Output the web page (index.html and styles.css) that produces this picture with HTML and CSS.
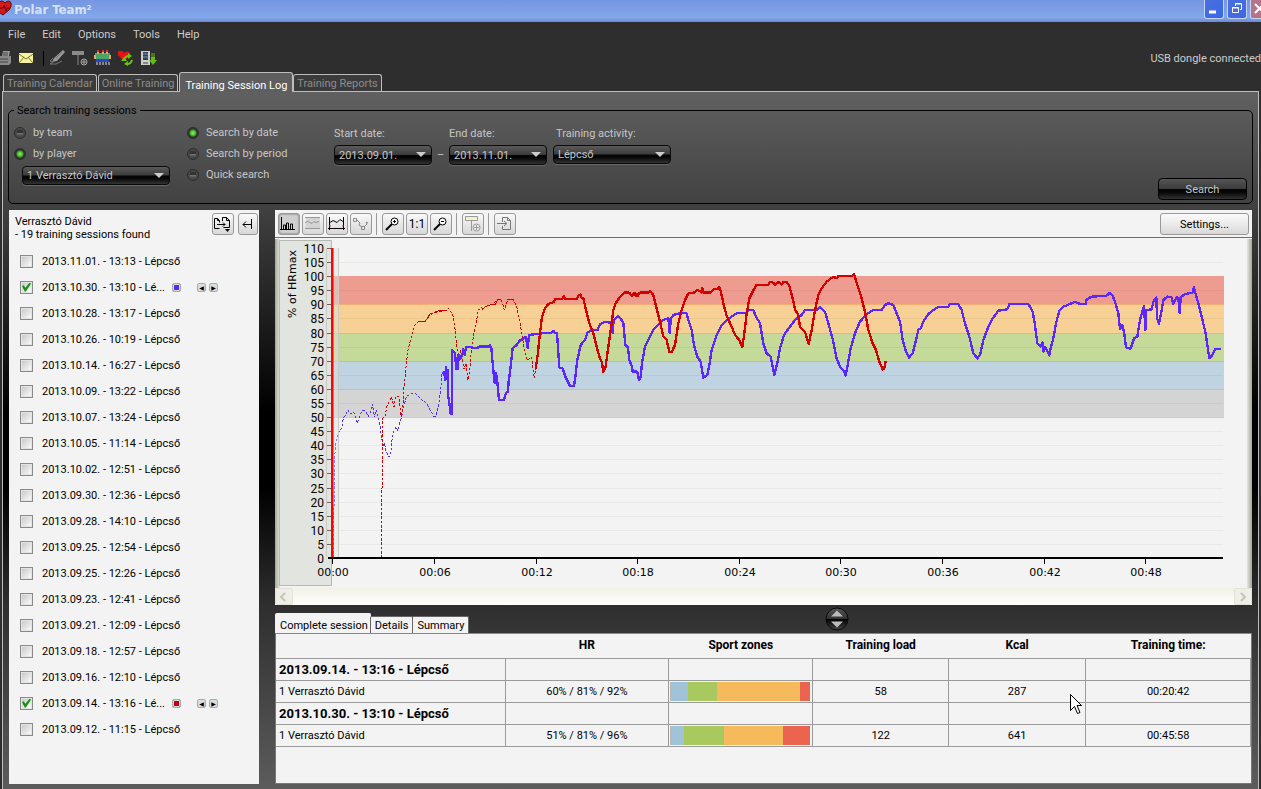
FILE: index.html
```html
<!DOCTYPE html>
<html lang="en">
<head>
<meta charset="utf-8">
<title>Polar Team²</title>
<link rel="stylesheet" href="styles.css">
</head>
<body>
<div class="app">
<header class="titlebar">
  <svg class="logo" width="13" height="16" viewBox="0 0 13 16"><path d="M-2 3Q2-1 5 3Q9-1 11 3Q12 7 9 10L3 15L-4 10Z" fill="#d81818" stroke="#5c0808"/><path d="M0 8h3l1-3 2 6 1-3h3" fill="none" stroke="#600"/></svg>
  <h1>Polar Team²</h1>
  <div class="winctl">
    <button aria-label="Minimize"><svg width="18" height="18"><path d="M4 12h7" stroke="#fff" stroke-width="3"/></svg></button>
    <button aria-label="Restore"><svg width="18" height="18" fill="none" stroke="#fff"><path d="M4.500 7.500h6v5h-6zM4 8h7M7.500 6V3.500h6v6H12M7 4h7"/></svg></button>
    <button class="close" aria-label="Close"><svg width="18" height="18"><path d="M4 4l9 9M13 4l-9 9" stroke="#fff" stroke-width="2"/></svg></button>
  </div>
</header>
<nav class="menu"><button>File</button><button>Edit</button><button>Options</button><button>Tools</button><button>Help</button></nav>
<div class="tools">
  <button aria-label="Print"><svg width="12" height="16"><path d="M3 1h7l-1 5H2z" fill="#999"/><path d="M0 6h11v7l-2 2H0z" fill="#888"/><path d="M3 3h5M3 5h5M0 9h8M0 12h8" stroke="#444"/></svg></button>
  <button aria-label="Mail"><svg width="24" height="16"><path d="M7 3h14v10H7z" fill="#f5f2a0"/><path d="M7 4l7 5 7-5M7 13l5-6M21 13l-5-6" fill="none" stroke="#77752a"/></svg></button>
  <i></i>
  <button aria-label="Pen"><svg width="22" height="16"><path d="M14 0l2 2-8 9-5 1 2-4z" fill="#999"/><path d="M4 8l-3 3 3 1-3 2h6l6-3M7 8l6-6" fill="none" stroke="#777"/></svg></button>
  <button aria-label="Marker"><svg width="23" height="16"><path d="M1 1h12v4H1z" fill="#8a8a8a"/><path d="M7 5v10" stroke="#888"/><circle cx="13" cy="12" r="3" fill="#333" stroke="#aaa"/><path d="M11 12h4M13 10v4" stroke="#aaa"/></svg></button>
  <button aria-label="Players"><svg width="23" height="16"><path d="M1 3h15v6H1z" fill="#4fa364"/><path d="M4 1v3M9 1v3M13 1v3M1 5v4M16 5v4" stroke="#f2a070" stroke-width="2"/><path d="M4 0v2M9 0v2M13 0v2" stroke="#d33" stroke-width="2"/><path d="M2 9h13v3H2z" fill="#2648d0"/><path d="M3 12v3M6 12v3M9 12v3M12 12v3M15 12v3" stroke="#dde"/></svg></button>
  <button aria-label="Heart rate sync"><svg width="23" height="16"><path d="M7 11L1 5Q0 0 4 1Q7 1 7 3Q10 0 13 3Q13 6 7 11" fill="#ee1111"/><path d="M7 10q1-4 5-4M15 10q-1 4-5 4" stroke="#63c90c" stroke-width="2" fill="none"/><path d="M11 3l4 3-4 3zM11 11l-4 3 4 2zM4 11l3-4 3 4z" fill="#63c90c"/></svg></button>
  <button aria-label="Download"><svg width="18" height="16"><path d="M1 1h9v14H1z" fill="#ccc"/><path d="M3 2h5v8H3z" fill="#2c4059"/><path d="M3 4h5M3 7h5" stroke="#7792ac"/><path d="M3 13h5" stroke="#444"/><path d="M11 4h4M11 6h4" stroke="#5fbf10"/><path d="M11 7h4v3h2l-4 5-4-5h2z" fill="#5fbf10"/></svg></button>
  <span class="usb">USB dongle connected</span>
</div>
<nav class="tabs"><button>Training Calendar</button><button>Online Training</button><button class="on">Training Session Log</button><button>Training Reports</button></nav>
<main class="panel">
<div class="searchwrap">
<fieldset class="search">
  <legend>Search training sessions</legend>
  <div class="who">
    <label class="opt"><input type="radio" name="who">by team</label>
    <label class="opt"><input type="radio" name="who" checked>by player</label>
    <span class="dd"><select aria-label="Player"><option>1 Verrasztó Dávid</option></select></span>
  </div>
  <div class="how">
    <label class="opt"><input type="radio" name="how" checked>Search by date</label>
    <label class="opt"><input type="radio" name="how">Search by period</label>
    <label class="opt"><input type="radio" name="how">Quick search</label>
  </div>
  <div class="field"><label for="sd">Start date:</label><span class="dd date"><select id="sd"><option>2013.09.01.</option></select></span></div>
  <span class="dash">–</span>
  <div class="field"><label for="ed">End date:</label><span class="dd date"><select id="ed"><option>2013.11.01.</option></select></span></div>
  <div class="field act"><label for="ac">Training activity:</label><span class="dd"><select id="ac"><option>Lépcső</option></select></span></div>
  <button class="go">Search</button>
</fieldset>
</div>
<div class="work">
<aside class="side">
  <div class="sidehead"><p>Verrasztó Dávid<br>- 19 training sessions found</p>
    <button class="tb" aria-label="Compare"><svg width="22" height="22" fill="none" stroke="#000"><path d="M7.500 15.500h-5v-10h3l2 2v2M5.500 5.500v2h2M10.500 8V4.500h4l3 3v7h-6M14.500 4.500v3h3M5 11.500h8M11 9.500l2 2-2 2"/><path d="M13 16h5l-2.500 3z" fill="#000" stroke="none"/></svg></button>
    <button class="tb slim" aria-label="Collapse"><svg width="18" height="22" fill="none" stroke="#000"><path d="M13.500 6v10M5 11.500h8M8 8.500l-3 3 3 3"/></svg></button>
  </div>
  <ul class="list">
    <li><label><input type="checkbox">2013.11.01. - 13:13 - Lépcső</label></li>
    <li><label><input type="checkbox" checked>2013.10.30. - 13:10 - Lé...</label><button class="sw" aria-label="Blue curve"></button><button class="ar" aria-label="Back">◀</button><button class="ar" aria-label="Forward">▶</button></li>
    <li><label><input type="checkbox">2013.10.28. - 13:17 - Lépcső</label></li>
    <li><label><input type="checkbox">2013.10.26. - 10:19 - Lépcső</label></li>
    <li><label><input type="checkbox">2013.10.14. - 16:27 - Lépcső</label></li>
    <li><label><input type="checkbox">2013.10.09. - 13:22 - Lépcső</label></li>
    <li><label><input type="checkbox">2013.10.07. - 13:24 - Lépcső</label></li>
    <li><label><input type="checkbox">2013.10.05. - 11:14 - Lépcső</label></li>
    <li><label><input type="checkbox">2013.10.02. - 12:51 - Lépcső</label></li>
    <li><label><input type="checkbox">2013.09.30. - 12:36 - Lépcső</label></li>
    <li><label><input type="checkbox">2013.09.28. - 14:10 - Lépcső</label></li>
    <li><label><input type="checkbox">2013.09.25. - 12:54 - Lépcső</label></li>
    <li><label><input type="checkbox">2013.09.25. - 12:26 - Lépcső</label></li>
    <li><label><input type="checkbox">2013.09.23. - 12:41 - Lépcső</label></li>
    <li><label><input type="checkbox">2013.09.21. - 12:09 - Lépcső</label></li>
    <li><label><input type="checkbox">2013.09.18. - 12:57 - Lépcső</label></li>
    <li><label><input type="checkbox">2013.09.16. - 12:10 - Lépcső</label></li>
    <li><label><input type="checkbox" checked>2013.09.14. - 13:16 - Lé...</label><button class="sw red" aria-label="Red curve"></button><button class="ar" aria-label="Back">◀</button><button class="ar" aria-label="Forward">▶</button></li>
    <li><label><input type="checkbox">2013.09.12. - 11:15 - Lépcső</label></li>
  </ul>
</aside>
<section class="content">
  <div class="cbar">
    <button class="tb on" aria-label="Zones"><svg width="22" height="22" fill="none" stroke="#000"><path d="M3.500 4v13M2 16.500h15M5.500 16v-4h2v4M8.500 16v-6h2v6M12.500 16v-5h2v5"/></svg></button>
    <button class="tb" aria-label="Band"><svg width="22" height="22" fill="none"><path d="M4 4h14v12H4z" fill="#d4d4d4"/><path d="M3 4.500h15M3 15.500h15M3 9.500l3-1 2 1 2 1 2-2 2 1 3-1" stroke="#999"/></svg></button>
    <button class="tb" aria-label="Limits"><svg width="22" height="22" fill="none" stroke="#000"><path d="M3.500 4v13M17.500 4v13M2 15.500h17M4 9.500l3-2 2 1 2 1 3-3 3 2"/><path d="M3 13h2M16 13h2" stroke="#c33"/></svg></button>
    <button class="tb" aria-label="Points"><svg width="22" height="22" fill="none" stroke="#888"><path d="M3.500 5.500h3v3h-3zM11.500 13.500h3v3h-3zM7 7l3 3-1 2 3 2M14 14l3-3-1-2 2 1"/></svg></button>
    <i></i>
    <button class="tb" aria-label="Zoom in"><svg width="22" height="22" fill="none" stroke="#000"><circle cx="12.500" cy="8.500" r="3.500" fill="#fff"/><path d="M11 8.500h3M12.500 7v3"/><path d="M10 11l-6 6" stroke-width="2"/></svg></button>
    <button class="tb one">1:1</button>
    <button class="tb" aria-label="Zoom out"><svg width="22" height="22" fill="none" stroke="#000"><circle cx="12.500" cy="8.500" r="3.500" fill="#fff"/><path d="M11 8.500h3"/><path d="M10 11l-6 6" stroke-width="2"/></svg></button>
    <i></i>
    <button class="tb" aria-label="Add marker"><svg width="22" height="22" fill="none" stroke="#999"><path d="M3.500 3.500h12v4h-12z" fill="#f7f3c4"/><path d="M9.500 8v10"/><circle cx="14.500" cy="14.500" r="3.500" fill="#eee"/><path d="M12 14.500h5M14.500 12v5"/></svg></button>
    <i></i>
    <button class="tb" aria-label="Export"><svg width="22" height="22" fill="none" stroke="#777"><path d="M8.500 9V4.500h5l3 3v9h-8V13M13.500 4.500v3h3M3 10.500h9M10 8l3 2.500-3 2.500"/></svg></button>
    <button class="set">Settings...</button>
  </div>
  <svg class="chart" viewBox="275 238 977 350" role="img" aria-label="Heart rate chart">
    <defs>
      <linearGradient id="l"><stop stop-color="#a5a695"/><stop offset="1" stop-color="#e6e7de"/></linearGradient>
      <linearGradient id="r"><stop stop-color="#e6e7de"/><stop offset="1" stop-color="#a5a695"/></linearGradient>
    </defs>
    <path d="M275 238h977v350H275z" fill="#f3f3f3"/>
    <path d="M275 239h5v349h-5z" fill="url(#l)"/><path d="M1247 239h5v349h-5z" fill="url(#r)"/>
    <path d="M279.500 240.500h52v345h-52z" fill="#e2e4df" stroke="#b8b9b5"/>
    <path class="px" fill="#ee9b90" d="M332 276h892v28H332z"/>
    <path class="px" fill="#f6d094" d="M332 304h892v29H332z"/>
    <path class="px" fill="#c5d998" d="M332 333h892v28H332z"/>
    <path class="px" fill="#bfd4e0" d="M332 361h892v28H332z"/>
    <path class="px" fill="#d4d4d4" d="M332 389h892v29H332z"/>
    <path stroke="#000" stroke-opacity=".04" d="M339 262.500h884M339 290.500h884M339 318.500h884M339 347.500h884M339 375.500h884M339 403.500h884M339 431.500h884M339 445.500h884M339 459.500h884M339 473.500h884M339 488.500h884M339 502.500h884M339 516.500h884M339 530.500h884M339 544.500h884"/>
    <path stroke="#f3ae74" d="M333 304.500h891"/><path stroke="#bacb80" d="M333 333.500h891"/><path stroke="#abc6ac" d="M333 361.500h891"/><path stroke="#bac3c8" d="M333 389.500h891"/><path stroke="#ccc" d="M333 417.500h891"/>
    <g class="thin px" transform="translate(330 260) scale(.33333)">
      <path class="b" d="M10 894V745L13 740V600L18 550L25 515L32 513L40 475L48 462L54 450L60 462L70 456L76 465L82 490L90 465L100 450L108 456L115 470L122 455L127 432L133 472L138 450L146 475L150 495L156 540L160 560L163 548L168 575L178 592L183 570L188 520L192 512L198 500L203 512L208 490L215 470L222 435L230 408L240 403L252 397L262 405L275 420L290 430L300 450L312 470L317 470L325 440L331 400L336 340"/>
      <path class="r" d="M155 894V685L158 680V475L165 470L170 440L178 425L184 410L192 440L198 408L207 410L213 468L220 430L222 380L228 320L234 270L245 225L255 195L265 185L285 184L300 165L325 155L350 150L355 145L362 153L370 170L376 215L380 265L388 290L391 268L397 300L402 328L408 310L413 360L419 335L424 270L430 230L438 190L445 150L455 142L458 150L465 140L490 133L500 118L515 122L523 150L534 118H550L560 140L568 175L576 225L585 280L592 300L605 290L613 355L617 325"/>
      <path class="s" d="M265 185H285L300 162H310M312 158L325 152H350M465 140L480 135H495L502 120H512M534 118H550" stroke="#d60000"/>
    </g>
    <g class="thick px" transform="translate(330 260) scale(.33333)">
      <path class="b" d="M338 342L342 335L346 360L348 320L350 355L353 330L354 405L358 430L362 462H366V270L370 275L375 280L379 328H384L386 283L392 295L397 285L400 268L404 285L408 262H425L440 265L448 260H478L480 255L484 265L488 310L494 370L498 338L502 365L507 420H522L528 398L534 395L536 365L542 320L548 265L560 255L568 243L580 235L588 230L593 265L597 225L635 220H660L671 213L676 220H681L688 323L698 325L706 350L720 378H732L736 350L742 300L752 255L765 240L772 218L785 210H803L810 192L825 186L845 188L848 220L851 180L865 168L872 175L880 190L886 255L894 262L898 300L906 320L908 335H922L927 360L932 350"/>
      <path class="r" d="M617 328L623 285L630 220L636 170L645 145L655 132L670 127L675 118L698 116L702 108L706 117H740L745 107L752 104L755 113L760 115L768 150L778 190L790 220L800 260L808 290L816 308L820 336L826 325L835 260L843 205L850 150L857 130L870 110L882 98H898L905 108L912 98L918 108L925 100H935"/>
    </g>
    <g class="thick px" transform="translate(620 260) scale(.33333)">
      <path class="b" d="M57 360L62 350L66 310L75 260L90 230L103 205L120 190L130 180L145 175L149 218L153 175L160 165L180 160H200L205 180L215 210L222 255L232 290L242 305L250 353L262 345L268 315L275 270L290 225L305 195L320 182L335 170L350 160H380L385 150H400L408 170L420 190L430 250L440 280L452 290L463 345L474 300L480 265L492 225L510 200L525 180L545 165L555 150H590L600 142L615 155L625 190L640 245L650 295L660 320L670 330L677 346L684 310L692 265L705 220L720 185L740 162L760 150H785L795 135L805 130L820 135L830 160L840 185L848 240L858 275L867 293L878 280L888 240L895 210L900 205"/>
      <path class="r" d="M8 100H30L35 108L45 100L53 108L60 98H85L90 92L100 105L110 145L120 185L130 230L140 240L148 276H155L165 255L175 190L185 150L195 120L205 100L225 97L232 90L245 97L247 85L252 98H270L280 88H293L297 80L302 92L310 130L320 168L335 200L345 225L358 240L367 262L373 220L380 160L388 115L398 95L408 76L445 74L450 66L460 68L465 75L475 66L485 73L490 66H500L508 78L518 115L525 148L535 165L540 200L555 215L566 252L575 210L585 150L595 105L605 85L620 65L640 50L650 55L655 48L698 47L702 42L708 62L722 105L735 155L745 210L758 250L768 270L778 305L788 328L793 325L797 303"/>
    </g>
    <g class="thick px" transform="translate(920 260) scale(.33333)">
      <path class="b" d="M0 210L10 185L25 162L40 150L55 141H85L90 132H115L125 150L135 190L148 230L160 280L172 295L180 285L190 240L205 200L215 180L235 152L262 148L268 132H325L338 155L345 195L352 250L362 260L368 248L371 275L376 262L388 286L392 265L400 235L408 190L418 152L430 140L450 132L465 125L480 132H497L500 118L515 110L560 107L570 98L577 105L585 125L595 160L600 208L607 195L612 215L618 262L632 266L642 235L652 230L660 180L672 138L676 210L679 150L695 148L700 125L709 112L711 175L717 192L724 155L730 120L742 110L755 112L760 132L765 120L770 112L775 115L779 160L782 112L795 102L818 98L822 82L826 98L835 130L845 170L857 220L863 262L868 294L875 288L886 267H903"/>
    </g>
    <path d="M326.500 248V557M338.500 248V557" stroke="#b9bab5"/><path d="M326 248h13v309h-13z" fill="#e2e4df" opacity=".4"/>
    <path stroke="#666" d="M327 248.500h5M327 262.500h5M327 276.500h5M327 290.500h5M327 304.500h5M327 318.500h5M327 333.500h5M327 347.500h5M327 361.500h5M327 375.500h5M327 389.500h5M327 403.500h5M327 417.500h5M327 431.500h5M327 445.500h5M327 459.500h5M327 473.500h5M327 488.500h5M327 502.500h5M327 516.500h5M327 530.500h5M327 544.500h5"/>
    <path d="M331.500 248v310" stroke="#555"/><path d="M332.500 248v310" stroke="#f00" stroke-width="2"/>
    <path d="M328 558h895" stroke="#000" stroke-width="2"/>
    <path stroke="#000" d="M332.500 559v5M434.500 559v5M536.500 559v5M637.500 559v5M739.500 559v5M840.500 559v5M942.500 559v5M1044.500 559v5M1145.500 559v5"/>
    <g class="ylab"><text x="324" y="253">110</text><text x="324" y="267">105</text><text x="324" y="281">100</text><text x="324" y="295">95</text><text x="324" y="309">90</text><text x="324" y="323">85</text><text x="324" y="338">80</text><text x="324" y="352">75</text><text x="324" y="366">70</text><text x="324" y="380">65</text><text x="324" y="394">60</text><text x="324" y="408">55</text><text x="324" y="422">50</text><text x="324" y="436">45</text><text x="324" y="450">40</text><text x="324" y="464">35</text><text x="324" y="478">30</text><text x="324" y="493">25</text><text x="324" y="507">20</text><text x="324" y="521">15</text><text x="324" y="535">10</text><text x="324" y="549">5</text><text x="324" y="563">0</text></g>
    <g class="xlab"><text x="333" y="576">00:00</text><text x="435" y="576">00:06</text><text x="537" y="576">00:12</text><text x="638" y="576">00:18</text><text x="740" y="576">00:24</text><text x="841" y="576">00:30</text><text x="943" y="576">00:36</text><text x="1045" y="576">00:42</text><text x="1146" y="576">00:48</text><text transform="translate(296 284) rotate(-90)">% of HRmax</text></g>
  </svg>
  <div class="scroll"><button aria-label="Scroll left"><svg width="16" height="15"><path d="M9 4L5 8l4 4" fill="none" stroke="#c5c4b8" stroke-width="2"/></svg></button><button aria-label="Scroll right"><svg width="16" height="15"><path d="M6 4l4 4-4 4" fill="none" stroke="#c5c4b8" stroke-width="2"/></svg></button></div>
  <div class="dtabs"><button class="on">Complete session</button><button>Details</button><button>Summary</button><span class="s1"></span>
    <button class="split" aria-label="Resize panes"><svg width="24" height="24"><defs><linearGradient id="k" x2="0" y2="1"><stop stop-color="#555"/><stop offset=".48" stop-color="#333"/><stop offset=".5" stop-color="#000"/><stop offset="1" stop-color="#444"/></linearGradient></defs><circle cx="12" cy="12" r="11" fill="url(#k)" stroke="#0a0a0a"/><path d="M6 9.500h12l-6-6zM6 14.500h12l-6 6z" fill="#bbb"/></svg></button><span class="s2"></span></div>
  <div class="result">
  <table>
    <colgroup><col class="c1"><col class="c2"><col class="c3"><col class="c4"><col class="c5"><col class="c6"></colgroup>
    <thead><tr><th></th><th>HR</th><th>Sport zones</th><th>Training load</th><th>Kcal</th><th>Training time:</th></tr></thead>
    <tbody>
    <tr><th>2013.09.14. - 13:16 - Lépcső</th><td></td><td></td><td></td><td></td><td></td></tr>
    <tr><td>1 Verrasztó Dávid</td><td>60% / 81% / 92%</td><td class="z"><div class="zones"><b class="g0" style="flex-grow:1"></b><b class="g1" style="flex-grow:17"></b><b class="g2" style="flex-grow:29"></b><b class="g3" style="flex-grow:83"></b><b class="g4" style="flex-grow:10"></b></div></td><td>58</td><td>287</td><td>00:20:42</td></tr>
    <tr><th>2013.10.30. - 13:10 - Lépcső</th><td></td><td></td><td></td><td></td><td></td></tr>
    <tr><td>1 Verrasztó Dávid</td><td>51% / 81% / 96%</td><td class="z"><div class="zones"><b class="g0" style="flex-grow:2"></b><b class="g1" style="flex-grow:12"></b><b class="g2" style="flex-grow:39"></b><b class="g3" style="flex-grow:59"></b><b class="g4" style="flex-grow:27"></b></div></td><td>122</td><td>641</td><td>00:45:58</td></tr>
    </tbody>
  </table>
  </div>
</section>
</div>
</main>
<svg class="pointer" width="14" height="23"><path d="M1.500 1.500v16l4-4 3 7 2.500-1-3-7h4.500z" fill="#fff" stroke="#000"/></svg>
</div>
</body>
</html>
```
FILE: styles.css
```css
*{box-sizing:border-box}
body{margin:0;font:11px/13px Roboto,"Liberation Sans",sans-serif;color:#000;background:#2e2e2e}
button,select,input{font:inherit;color:inherit;margin:0;padding:0}
button{background:none;border:0;white-space:nowrap}
svg{display:block}
.app{min-height:100vh;display:flex;flex-direction:column;overflow:hidden;position:relative}

.titlebar{height:22px;display:flex;background:linear-gradient(#7496e2,#7b9be4 30%,#82a9ea 80%,#6f88d8)}
.titlebar h1{margin:2px 0 0 1px;font:bold 13px/15px "DejaVu Sans Condensed","DejaVu Sans",sans-serif;color:#d6e2fb}
.winctl{margin:0 -9px 0 auto;display:flex;gap:3px}
.winctl button{width:20px;height:19px;border:1px solid #c5d3f5;border-top:0;border-radius:0 0 3px 3px;background:linear-gradient(135deg,#4a70dd,#3c66e8)}
.winctl .close{background:#b5748a}

.menu{height:24px;display:flex;gap:17px;padding-left:8px;color:#ccc}
.tools{height:24px;display:flex;align-items:center;color:#ccc}
.tools i{width:1px;height:15px;background:#000;margin:0 5px 0 7px}
.tools .usb{margin-left:auto;white-space:nowrap}

.tabs{display:flex;align-items:flex-end;gap:1px;padding-left:3px;height:22px;position:relative}
.tabs button{height:17px;padding:0 3px;color:#8b8b8b;border:1px solid #bdbdbd;border-bottom:0;border-radius:3px 3px 0 0;margin-bottom:1px;background:#3b3b3b}
.tabs .on{height:20px;margin:0 -1px 0 0;padding:5px 5px 0;color:#fff;background:#5e5e5e;z-index:1}
.panel{flex:1;display:flex;flex-direction:column;margin:-1px 2px 0;border:1px solid #bdbdbd;border-bottom:0}
.searchwrap{padding:12px 5px 6px;background:linear-gradient(#606060,#404040)}
.search{display:flex;min-width:0;margin:0;padding:5px 5px 3px 5px;border:1px solid #000;border-radius:5px;color:#c6c6c6}
.search legend{margin-left:0;padding:0 3px;color:#000}
.opt{display:flex;align-items:center;gap:7px;height:21px}
.opt input{appearance:none;width:12px;height:12px;border:1px solid #2c2c2c;border-radius:50%;background:linear-gradient(#333 50%,#777 52%,#444) 50%/6px 6px no-repeat #484848}
.opt input:checked{background:radial-gradient(circle,#7de05c 1px,#37a51a 3px,#333 4px)}
.who{width:173px;padding-bottom:15px}
.who .dd{width:148px;margin:2px 0 0 8px}
.how{width:147px}
.dd{display:block;position:relative;height:19px}
.dd select{appearance:none;width:100%;height:100%;border:1px solid #0a0a0a;border-radius:4px;padding:0 4px;box-shadow:0 1px #666;background:linear-gradient(#5a5a5a,#3c3c3c 48%,#050505 52%,#050505 65%,#333)}
.dd::after{content:"";position:absolute;right:6px;top:7px;border:5px solid transparent;border-top-color:#ccc;border-bottom:0}
.field{padding-top:5px;display:flex;flex-direction:column;gap:5px}
.field .dd{width:98px;height:20px}
.act{margin-left:6px}
.act label{padding-left:3px}
.act .dd{width:118px;height:19px}
.dash{width:17px;text-align:center;padding-top:26px}
.go{margin-left:auto;align-self:flex-end;width:89px;height:22px;border:1px solid #000;border-radius:4px;background:linear-gradient(#555,#3c3c3c 48%,#050505 52%,#050505 65%,#333)}

.work{flex:1;display:flex;gap:16px;padding:0 6px 5px;background:linear-gradient(#404040,#000 35%,#000 48%,#2e2e2e 68%,#5c5c5c)}
.side{width:250px;background:#f3f3f3}
.sidehead{display:flex;gap:4px;padding:3px 1px 0 6px}
.sidehead p{flex:1;margin:2px 0 0}
.tb{width:22px;height:22px;flex:none;border:1px solid #999;border-radius:3px;background:linear-gradient(#fafafa,#e8e8e8 48%,#d8d8d8)}
.tb svg{margin:-1px}
.tb.on{background:#cfcfcf;box-shadow:inset 0 0 2px #555}
.tb.slim{width:20px}
.list{list-style:none;margin:7px 0 0;padding:0}
.list li{height:26px;display:flex;align-items:center}
.list label{display:flex;align-items:center;gap:9px;padding-left:11px;white-space:nowrap}
.list input{appearance:none;width:13px;height:13px;border:1px solid #8a8a8a;background:linear-gradient(135deg,#c4c4c4,#fff);box-shadow:inset 0 0 0 1px #e4e4e4}
.list input:checked::before{content:"";display:block;width:9px;height:9px;margin:1px;background:#169116;clip-path:polygon(0 40%,18% 30%,38% 58%,85% 0,100% 14%,42% 100%,30% 100%)}
.sw,.ar{width:9px;height:9px;border:1px solid #aaa;border-radius:2px;background:#5a28ff;box-shadow:inset 0 0 0 1px #ddd}
.sw{margin:0 16px 0 7px}
.sw.red{background:#c00010}
.ar{background:#ddd;font:6px/7px "DejaVu Sans",sans-serif;margin-right:3px}

.content{flex:1;min-width:0;display:flex;flex-direction:column}
.cbar{display:flex;gap:2px;padding:3px 3px 2px;background:#f3f3f3;border-bottom:1px solid #6e6e6e}
.cbar i{width:1px;margin:0 3px 0 2px;background:#999}
.one{font-size:12px}
.set{margin-left:auto;width:89px;height:22px;border:1px solid #999;border-radius:3px;background:linear-gradient(#fafafa,#ececec 48%,#d8d8d8)}
.chart{width:100%;height:auto}
.px{shape-rendering:crispEdges}
.thin,.thick{fill:none}
.thin{stroke-width:3}
.thin .b,.thin .r{stroke-dasharray:8 5}
.thick{stroke-width:7;stroke-linejoin:round}
.b{stroke:#5a28ff}
.r{stroke:#d60000}
.ylab{font-size:12px;text-anchor:end}
.xlab{font:11px "DejaVu Sans",sans-serif;text-anchor:middle}
.scroll{display:flex;justify-content:space-between;height:17px;background:linear-gradient(#f1f0e8,#fffffb)}
.scroll button{border:1px solid #e3e2d8;border-radius:2px;background:#f0efe7}
.dtabs{display:flex;align-items:flex-end;height:28px}
.dtabs button{height:17px;padding:0 4px;background:#f3f3f3;border:1px solid #666;border-bottom:0;margin-left:-1px;border-radius:2px 2px 0 0}
.dtabs .on{height:20px;margin:0;padding:4px 2px 0 4px;border-color:#f3f3f3}
.dtabs .s1{flex:357}
.dtabs .s2{flex:405}
.dtabs .split{width:24px;height:24px;align-self:center;background:none;border:0;padding:0;margin:0}
.result{flex:1;background:#f3f3f3;border:1px solid #777;border-top-color:#888}
table{width:100%;table-layout:fixed;border-collapse:collapse}
.c1{width:23.500%}.c2{width:16.800%}.c3{width:14.800%}.c4{width:13.900%}.c5{width:14.100%}
th,td{height:22px;padding:0 3px;text-align:center;border:1px solid #9b9b9b}
td:first-child,tbody th{text-align:left}
tr>:first-child{border-left:0}
thead th{height:24px;border-width:0 0 1px;font-size:12px}
tbody th{font-size:13px}
td.z{padding:1px 2px 1px 1px}
.zones{display:flex;height:19px}
.g0{background:#bbb}.g1{background:#a0c3d7}.g2{background:#a8c960}.g3{background:#f5ba5c}.g4{background:#ec6350}
.pointer{position:absolute;left:1069px;top:693px}
```
